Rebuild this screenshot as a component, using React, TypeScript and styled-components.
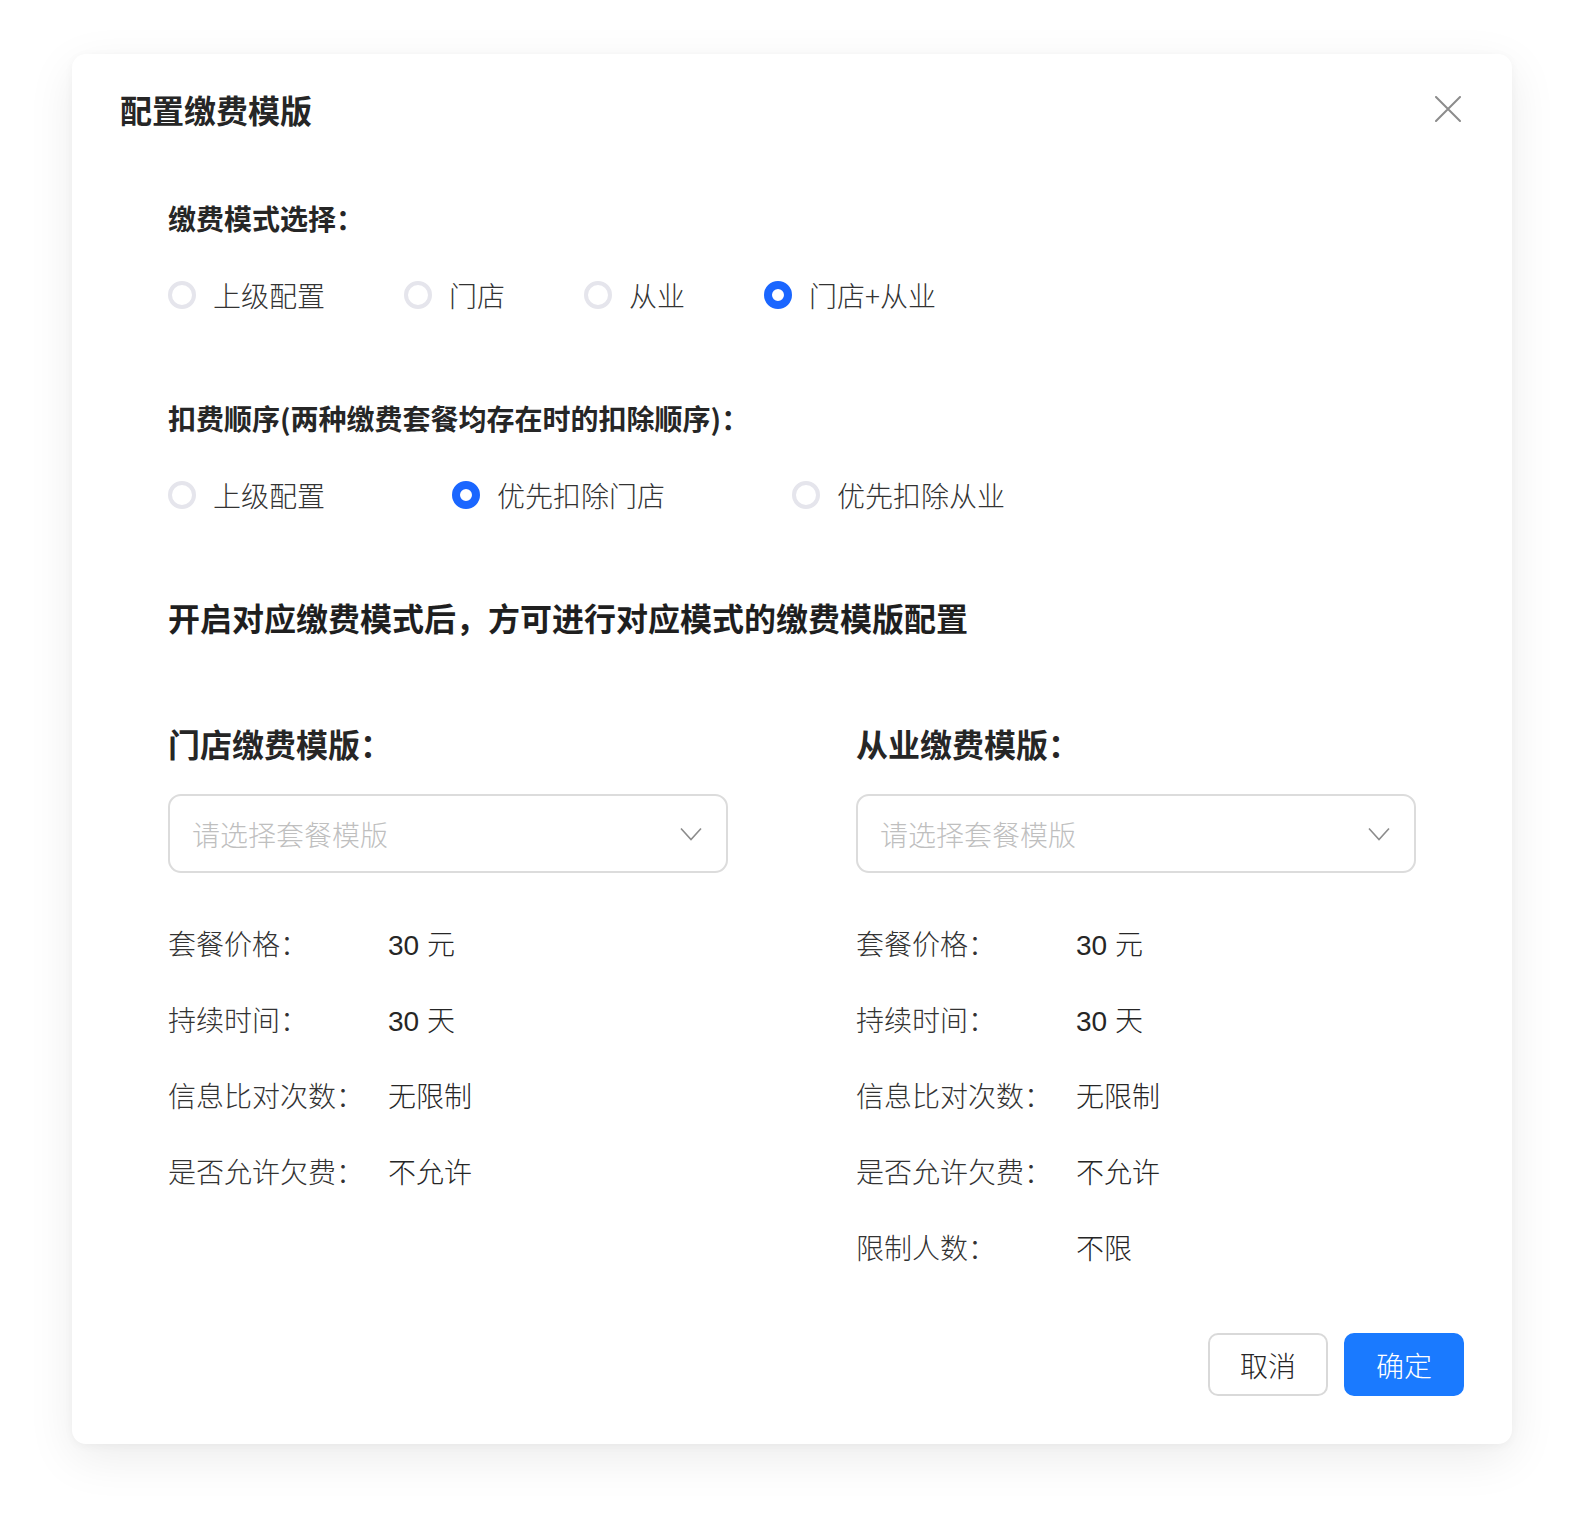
import React from "react";
import { styled, createGlobalStyle } from "styled-components";

interface IOption {
  label: string;
  checked?: boolean;
}

interface IInfo {
  label: string;
  value: string;
}

interface ITemplate {
  title: string;
  infos: IInfo[];
}

const modeOptions: IOption[] = [
  { label: "上级配置" },
  { label: "门店" },
  { label: "从业" },
  { label: "门店+从业", checked: true },
];

const orderOptions: IOption[] = [
  { label: "上级配置" },
  { label: "优先扣除门店", checked: true },
  { label: "优先扣除从业" },
];

const baseInfos: IInfo[] = [
  { label: "套餐价格：", value: "30 元" },
  { label: "持续时间：", value: "30 天" },
  { label: "信息比对次数：", value: "无限制" },
  { label: "是否允许欠费：", value: "不允许" },
];

const templates: ITemplate[] = [
  { title: "门店缴费模版：", infos: baseInfos },
  {
    title: "从业缴费模版：",
    infos: [...baseInfos, { label: "限制人数：", value: "不限" }],
  },
];

function RadioGroup({ options, gap }: { options: IOption[]; gap: number }) {
  return (
    <RadioRow $gap={gap}>
      {options.map((option) => (
        <RadioItem key={option.label}>
          <RadioDot $checked={!!option.checked} />
          <span>{option.label}</span>
        </RadioItem>
      ))}
    </RadioRow>
  );
}

function App() {
  return (
    <>
      <GlobalStyle />
      <Page>
        <Modal>
          <Header>
            <Title>配置缴费模版</Title>
            <CloseButton aria-label="关闭">
              <svg width="26" height="26" viewBox="0 0 26 26">
                <path
                  d="M1 1L25 25M25 1L1 25"
                  stroke="#8c8c8c"
                  strokeWidth="2"
                  strokeLinecap="round"
                />
              </svg>
            </CloseButton>
          </Header>

          <Body>
            <SectionLabel>缴费模式选择：</SectionLabel>
            <RadioGroup options={modeOptions} gap={79} />

            <SectionLabel $top={83}>
              扣费顺序(两种缴费套餐均存在时的扣除顺序)：
            </SectionLabel>
            <RadioGroup options={orderOptions} gap={127} />

            <Notice>开启对应缴费模式后，方可进行对应模式的缴费模版配置</Notice>

            <Columns>
              {templates.map((template) => (
                <Column key={template.title}>
                  <ColumnTitle>{template.title}</ColumnTitle>
                  <Select>
                    <span>请选择套餐模版</span>
                    <svg width="22" height="14" viewBox="0 0 22 14">
                      <path
                        d="M1 1.5L11 12.5L21 1.5"
                        stroke="#8c8c8c"
                        strokeWidth="1.6"
                        fill="none"
                      />
                    </svg>
                  </Select>
                  <InfoList>
                    {template.infos.map((info) => (
                      <InfoRow key={info.label}>
                        <InfoLabel>{info.label}</InfoLabel>
                        <InfoValue>{info.value}</InfoValue>
                      </InfoRow>
                    ))}
                  </InfoList>
                </Column>
              ))}
            </Columns>
          </Body>

          <Footer>
            <Button>取消</Button>
            <Button $primary>确定</Button>
          </Footer>
        </Modal>
      </Page>
    </>
  );
}

const GlobalStyle = createGlobalStyle`
  body {
    margin: 0;
    background: #ffffff;
    font-family: "Noto Sans CJK SC", "Noto Sans", "Liberation Sans", sans-serif;
    color: #262626;
  }
`;

const Page = styled.div`
  padding: 54px 72px 91px;
`;

const Modal = styled.div`
  background: #fff;
  border-radius: 14px;
  box-shadow: 0 14px 48px rgba(0, 0, 0, 0.08), 0 2px 10px rgba(0, 0, 0, 0.04);
  padding: 35px 48px 48px;
`;

const Header = styled.div`
  display: flex;
  justify-content: space-between;
  align-items: center;
`;

const Title = styled.h1`
  margin: 0;
  font-size: 32px;
  line-height: 40px;
  font-weight: 700;
  color: #262626;
`;

const CloseButton = styled.button`
  display: flex;
  align-items: center;
  justify-content: center;
  width: 32px;
  height: 32px;
  padding: 0;
  border: none;
  background: none;
  cursor: pointer;
`;

const Body = styled.div`
  padding: 0 48px;
`;

const SectionLabel = styled.div<{ $top?: number }>`
  margin-top: ${({ $top }) => $top ?? 69}px;
  font-size: 28px;
  line-height: 40px;
  font-weight: 700;
  color: #262626;
`;

const RadioRow = styled.div<{ $gap: number }>`
  display: flex;
  align-items: center;
  gap: ${({ $gap }) => $gap}px;
  margin-top: 37px;
`;

const RadioItem = styled.label`
  display: flex;
  align-items: center;
  gap: 17px;
  font-size: 28px;
  line-height: 40px;
  font-weight: 300;
  color: #333;
  cursor: pointer;
`;

const RadioDot = styled.span<{ $checked: boolean }>`
  box-sizing: border-box;
  width: 28px;
  height: 28px;
  border-radius: 50%;
  background: #fff;
  border: ${({ $checked }) =>
    $checked ? "8px solid #1a66ff" : "4px solid #e5e5ec"};
`;

const Notice = styled.div`
  margin-top: 82px;
  font-size: 32px;
  line-height: 40px;
  font-weight: 700;
  color: #1f1f1f;
`;

const Columns = styled.div`
  display: grid;
  grid-template-columns: 560px 560px;
  column-gap: 128px;
  margin-top: 86px;
`;

const Column = styled.div`
  display: flex;
  flex-direction: column;
`;

const ColumnTitle = styled.div`
  font-size: 32px;
  line-height: 40px;
  font-weight: 700;
  color: #262626;
`;

const Select = styled.div`
  box-sizing: border-box;
  display: flex;
  align-items: center;
  justify-content: space-between;
  height: 79px;
  margin-top: 31px;
  padding: 0 24px 0 22px;
  border: 2px solid #dcdcdc;
  border-radius: 13px;
  font-size: 28px;
  font-weight: 300;
  color: #bfbfbf;
`;

const InfoList = styled.div`
  display: flex;
  flex-direction: column;
  gap: 36px;
  margin-top: 50px;
`;

const InfoRow = styled.div`
  display: flex;
  align-items: baseline;
  height: 40px;
  font-size: 28px;
  line-height: 40px;
  font-weight: 300;
  color: #333;
`;

const InfoLabel = styled.span`
  width: 220px;
  flex-shrink: 0;
`;

const InfoValue = styled.span`
  font-family: "Liberation Sans", "Noto Sans CJK SC", sans-serif;
  color: #262626;
`;

const Footer = styled.div`
  display: flex;
  justify-content: flex-end;
  gap: 16px;
  margin-top: 66px;
`;

const Button = styled.button<{ $primary?: boolean }>`
  box-sizing: border-box;
  width: 120px;
  height: 63px;
  border-radius: 10px;
  font-family: inherit;
  font-size: 28px;
  font-weight: 300;
  cursor: pointer;
  border: 2px solid ${({ $primary }) => ($primary ? "#1a7aff" : "#d9d9d9")};
  background: ${({ $primary }) => ($primary ? "#1a7aff" : "#fff")};
  color: ${({ $primary }) => ($primary ? "#fff" : "#262626")};
`;

export default App;
